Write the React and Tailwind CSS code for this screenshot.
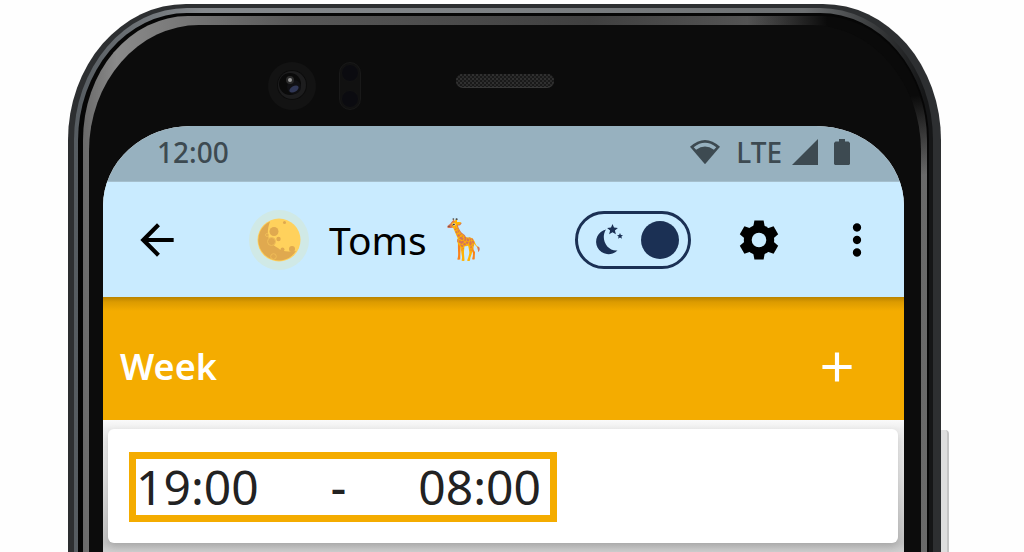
import { useState } from "react";
import { MdAdd, MdArrowBack, MdMoreVert } from "react-icons/md";

const Camera = () => (
  <svg width="48" height="48" viewBox="0 0 48 48" aria-hidden="true">
    <circle cx="24" cy="24" r="24" fill="#131313" />
    <circle cx="24" cy="23" r="15" fill="#0c0c0c" />
    <circle cx="24" cy="23" r="14" fill="#1d1d1e" />
    <circle cx="22" cy="22" r="11" fill="#0a0a0a" />
    <circle cx="26" cy="25" r="7" fill="#101013" />
    <ellipse cx="26" cy="27" rx="5" ry="3" transform="rotate(-30 26 27)" fill="#303756" />
    <circle cx="22" cy="18" r="4" fill="#2a2a2a" />
    <circle cx="22" cy="18" r="2" fill="#999" />
  </svg>
);

const Sensors = () => (
  <svg width="22" height="48" viewBox="0 0 22 48" aria-hidden="true">
    <rect x="0.5" y="0.5" width="21" height="47" rx="10.5" fill="#111" stroke="#191919" />
    <circle cx="11" cy="11" r="8.5" fill="#0b0b10" stroke="#131313" />
    <circle cx="11" cy="37" r="8.5" fill="#0b0b10" stroke="#131313" />
  </svg>
);

const Speaker = () => (
  <svg width="98" height="14" viewBox="0 0 98 14" aria-hidden="true">
    <defs>
      <pattern id="mesh" width="4" height="4" patternUnits="userSpaceOnUse">
        <rect width="4" height="4" fill="#191919" />
        <rect width="2" height="2" fill="#303030" />
        <rect x="2" y="2" width="2" height="2" fill="#2a2a2a" />
      </pattern>
    </defs>
    <rect width="98" height="14" rx="7" fill="#383838" />
    <rect width="98" height="13" rx="6.5" fill="url(#mesh)" />
  </svg>
);

const Moon = () => (
  <svg width="60" height="60" viewBox="0 0 60 60" aria-hidden="true">
    <circle cx="30" cy="30" r="30" fill="#d0e9e6" />
    <circle cx="30" cy="30" r="21.5" fill="#ffd15c" />
    <path
      d="M21 11.5C16 25 20 34 29 38c4 4 10 4 18 3C43 47 37 50.5 30 50.5A20.5 20.5 0 0 1 21 11.5Z"
      fill="#e0a94f"
    />
    <g fill="#e0a94f">
      <circle cx="25" cy="21.5" r="4.5" />
      <circle cx="29.5" cy="29" r="2.2" />
      <circle cx="35.5" cy="12.5" r="1.5" />
      <circle cx="43" cy="39" r="3" />
      <circle cx="33.5" cy="39.5" r="2" />
    </g>
    <g fill="#e0a94f" stroke="#efbd58">
      <circle cx="22.5" cy="31.5" r="4" />
      <circle cx="24.5" cy="46.5" r="2.8" />
      <circle cx="18" cy="25" r="1.5" />
    </g>
  </svg>
);

const Gear = () => {
  const teeth = "20.4 5.5 29.6 5.5 31 13 31 37 29.6 44.5 20.4 44.5 19 37 19 13";
  return (
    <svg width="50" height="50" viewBox="0 0 50 50" aria-hidden="true">
      <circle cx="25" cy="25" r="15.2" />
      {[0, 60, 120].map((deg) => (
        <polygon key={deg} points={teeth} transform={`rotate(${deg} 25 25)`} />
      ))}
      <circle cx="25" cy="25" r="7.3" fill="#c9ebff" />
    </svg>
  );
};

const StatusBar = () => (
  <div className="flex h-14 items-center justify-between border-b border-[#a5bfcd] bg-[#97b1bf] pb-1 pl-[54px] pr-[54px] text-[28px] leading-none text-[#3d4a51]">
    <span className="font-medium">12:00</span>
    <div className="flex items-center gap-3">
      <svg className="mr-1" width="30" height="26" viewBox="0 0 32 26" aria-hidden="true">
        <path d="M0 7.500Q16-7 32 7.500L16 26Z" fill="#3d4a51" />
        <path
          d="M4 8Q16-1.500 28 8L25.500 10.500Q16 4 6.500 10.500Z"
          fill="#97b1bf"
        />
      </svg>
      <div className="flex items-center gap-[10px]">
        <span className="font-medium">LTE</span>
        <svg width="26" height="26" viewBox="0 0 26 26" aria-hidden="true">
          <path d="M26 0V26H0Z" fill="#3d4a51" />
        </svg>
      </div>
      <svg className="ml-1" width="16" height="26" viewBox="0 0 16 26" aria-hidden="true">
        <path d="M5 0h6v2.500h3.500L16 4v21L15 26H1L0 25V4L1.500 2.500H5Z" fill="#3d4a51" />
      </svg>
    </div>
  </div>
);

const NightSwitch = () => {
  const [night, setNight] = useState(true);
  return (
    <label className="flex h-[58px] w-[116px] cursor-pointer items-center justify-between rounded-full border-3 border-[#1b3054] pl-[17px] pr-[9px]">
      <input
        type="checkbox"
        aria-label="Night mode"
        className="sr-only"
        checked={night}
        onChange={() => setNight(!night)}
      />
      <svg width="28" height="31" viewBox="0 0 28 31" fill="#1b3054" aria-hidden="true">
        <path d="M11 5.500C5 15 12 27.500 22.500 26.500A12.500 12.500 0 1 1 11 5.500Z" />
        <path d="m17.500 0 1.500 3.600 3.900.3-3 2.500 1 3.800-3.400-2-3.400 2 1-3.800-3-2.500 3.900-.3Z" />
        <path d="m25 9 .9 2 2.100.2-1.600 1.400.5 2.100-1.900-1.100-1.900 1.100.5-2.100-1.600-1.400 2.100-.2Z" />
      </svg>
      <span className="size-[38px] rounded-full bg-[#1b3054]" />
    </label>
  );
};

const AppBar = () => (
  <header className="flex h-[115px] items-center bg-[#c9ebff] pl-[29px] pr-[22px] text-black">
    <button type="button" aria-label="Back">
      <MdArrowBack size={50} />
    </button>
    <h1 className="ml-[67px] flex items-center text-[39px] leading-none">
      <Moon />
      <span className="ml-5">Toms</span>
      <span className="ml-3 pb-1">🦒</span>
    </h1>
    <div className="ml-auto flex items-center">
      <NightSwitch />
      <button type="button" aria-label="Settings" className="ml-[43px]">
        <Gear />
      </button>
      <button type="button" aria-label="More" className="ml-12">
        <MdMoreVert size={50} />
      </button>
    </div>
  </header>
);

const Screen = () => (
  <main className="ml-[14px] mr-[17px] flex flex-1 flex-col overflow-hidden rounded-t-[88px_80px] bg-[#f4f4f4]">
    <StatusBar />
    <AppBar />
    <section className="flex flex-1 flex-col">
      <div className="flex h-[123px] items-center justify-between bg-[linear-gradient(#b98300,#dc9b00_5px,#f4ac00_14px)] pb-1 pl-[17px] pr-[42px] pt-5 text-white">
        <h2 className="text-[36px] font-semibold leading-none">Week</h2>
        <button type="button" aria-label="Add time">
          <MdAdd size={50} />
        </button>
      </div>
      <div className="flex-1 bg-[linear-gradient(#fafafa,#eee_9px,#e4e4e4_50px,#c4c4c4_123px,#d0d0d0)] pl-[5px] pr-[6px] pt-[9px]">
        <div className="rounded-md bg-white px-[21px] pb-[21px] pt-[23px] shadow-[0_4px_8px_rgba(0,0,0,0.15)]">
          <div className="flex h-[70px] w-[428px] items-center justify-between border-7 border-[#f4ac00] pr-[9px] text-[48px] leading-none text-[#222]">
            <button type="button">19:00</button>
            <span className="font-medium">-</span>
            <button type="button">08:00</button>
          </div>
        </div>
      </div>
    </section>
  </main>
);

export default function App() {
  return (
    <div className="flex h-screen overflow-hidden bg-[#fefefe] pl-[68px] pr-[75px] pt-1 font-['Noto_Sans',sans-serif]">
      {/* metal frame, then the glass edge, then the black face */}
      <div className="flex flex-1 rounded-t-[118px_136px] bg-[#2d2f31] pl-[6px] pr-2 pt-1">
        <div className="flex flex-1 rounded-t-[113px_132px] bg-[linear-gradient(to_right,#555b60,#85898d_15%,#7d8184_50%,#6d7072_85%,#151617_99%)] pl-1 pr-1 pt-[5px]">
          <div className="flex flex-1 rounded-t-[109px_128px] bg-[#060606] pl-[5px] pr-[2px] pt-[3px]">
            <div className="flex flex-1 rounded-t-[105px_124px] bg-[radial-gradient(circle_at_calc(100%-20px)_0,#0a0a0a_80px,transparent_160px),linear-gradient(to_right,#6a6a6a,#8a8a8a_4%,#585858_25%,#404040_60%,#6a6a6a)] pl-[6px] pr-[6px] pt-[9px]">
              <div className="flex flex-1 flex-col rounded-t-[110px_126px] bg-[#0c0c0c]">
                <div className="grid h-[101px] grid-cols-[1fr_auto_1fr] items-center pt-5">
                  <div className="flex justify-end gap-[23px] pr-[95px]">
                    <Camera />
                    <Sensors />
                  </div>
                  <div className="pb-[10px]">
                    <Speaker />
                  </div>
                </div>
                <Screen />
              </div>
            </div>
          </div>
        </div>
      </div>
      <div className="mt-[426px] w-2 rounded-tr-sm border-r-2 border-[#c4c4c4] bg-[#dedede]" />
    </div>
  );
}
